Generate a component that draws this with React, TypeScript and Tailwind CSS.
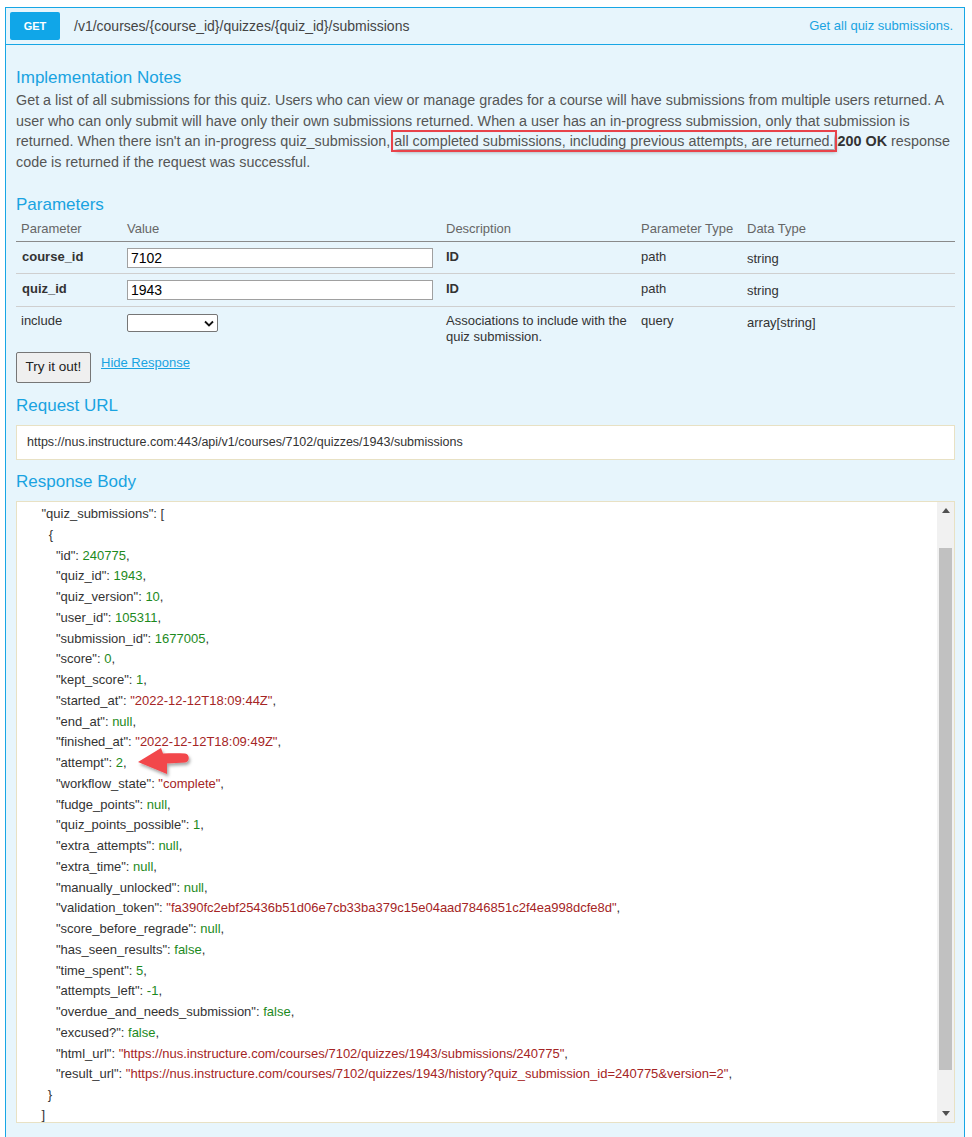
import React from "react";

const F = { fontFamily: '"Liberation Sans", Arial, sans-serif' };

function kv(k: string, v: string, t: "n" | "s") {
  return (
    <>
      <span>"{k}": </span>
      <span className={t === "n" ? "text-[#1d8a1d]" : "text-[#a52525]"}>{v}</span>
      <span>,</span>
    </>
  );
}

const items: [string, string, "n" | "s"][] = [
  ["id", "240775", "n"],
  ["quiz_id", "1943", "n"],
  ["quiz_version", "10", "n"],
  ["user_id", "105311", "n"],
  ["submission_id", "1677005", "n"],
  ["score", "0", "n"],
  ["kept_score", "1", "n"],
  ["started_at", '"2022-12-12T18:09:44Z"', "s"],
  ["end_at", "null", "n"],
  ["finished_at", '"2022-12-12T18:09:49Z"', "s"],
  ["attempt", "2", "n"],
  ["workflow_state", '"complete"', "s"],
  ["fudge_points", "null", "n"],
  ["quiz_points_possible", "1", "n"],
  ["extra_attempts", "null", "n"],
  ["extra_time", "null", "n"],
  ["manually_unlocked", "null", "n"],
  ["validation_token", '"fa390fc2ebf25436b51d06e7cb33ba379c15e04aad7846851c2f4ea998dcfe8d"', "s"],
  ["score_before_regrade", "null", "n"],
  ["has_seen_results", "false", "n"],
  ["time_spent", "5", "n"],
  ["attempts_left", "-1", "n"],
  ["overdue_and_needs_submission", "false", "n"],
  ["excused?", "false", "n"],
  ["html_url", '"https://nus.instructure.com/courses/7102/quizzes/1943/submissions/240775"', "s"],
  ["result_url", '"https://nus.instructure.com/courses/7102/quizzes/1943/history?quiz_submission_id=240775&version=2"', "s"],
];

function Heading({ children }: { children: React.ReactNode }) {
  return <div className="text-[17px] leading-[22px] text-[#19a3e1]">{children}</div>;
}

const COLS = "grid grid-cols-[111px_319px_195px_106px_1fr]";

export default function App() {
  return (
    <div className="bg-white min-h-[1137px] pt-[7px] pl-[5px]" style={F}>
      <div className="w-[960px] h-[1140px] border border-[#17a6e5] bg-[#e7f5fc]">
        {/* header */}
        <div className="h-[37px] border-b border-[#17a6e5] flex items-center pl-[4px] pr-[11px]">
          <div className="w-[50px] h-[28px] bg-[#10a6e8] rounded-[2px] flex items-center justify-center text-white text-[11px] font-bold">
            GET
          </div>
          <div className="ml-[14px] text-[14px] text-[#444] flex-1">/v1/courses/{"{course_id}"}/quizzes/{"{quiz_id}"}/submissions</div>
          <div className="text-[13px] text-[#19a3e1] -mt-[1px]">Get all quiz submissions.</div>
        </div>

        <div className="pl-[10px] pr-[9px]">
          <div className="pt-[22px]">
            <Heading>Implementation Notes</Heading>
          </div>
          <p className="text-[14.35px] leading-[20.5px] text-[#555] mt-[1px]">
            Get a list of all submissions for this quiz. Users who can view or manage grades for a course will have submissions from multiple users returned. A user who can only submit will have only their own submissions returned. When a user has an in-progress submission, only that submission is returned. When there isn't an in-progress quiz_submission,{" "}
            <span className="outline-2 outline-offset-[1px] outline-[#e8434a] shadow-[2px_3px_4px_rgba(0,0,0,0.35)]">
              all completed submissions, including previous attempts, are returned.
            </span>{" "}
            <b className="text-[#333]">200 OK</b> response code is returned if the request was successful.
          </p>

          <div className="mt-[22px]">
            <Heading>Parameters</Heading>
          </div>
          <div className="mt-[3px] text-[13px]">
            <div className={`${COLS} border-b border-[#8a8a8a] text-[#666] h-[23px] items-start`}>
              <div className="pl-[5px]">Parameter</div>
              <div>Value</div>
              <div>Description</div>
              <div>Parameter Type</div>
              <div>Data Type</div>
            </div>
            <div className={`${COLS} border-b border-[#cfcfcf] h-[32px] text-[#333]`}>
              <div className="pl-[6px] pt-[5px] font-bold">course_id</div>
              <div className="pt-[6px]">
                <div className="w-[306px] h-[20px] bg-white border border-[#a0a0a0] text-[14px] leading-[18px] pl-[3px] text-black">7102</div>
              </div>
              <div className="pt-[5px] font-bold">ID</div>
              <div className="pt-[5px]">path</div>
              <div className="pt-[7px]">string</div>
            </div>
            <div className={`${COLS} border-b border-[#cfcfcf] h-[33px] text-[#333]`}>
              <div className="pl-[6px] pt-[5px] font-bold">quiz_id</div>
              <div className="pt-[6px]">
                <div className="w-[306px] h-[20px] bg-white border border-[#a0a0a0] text-[14px] leading-[18px] pl-[3px] text-black">1943</div>
              </div>
              <div className="pt-[5px] font-bold">ID</div>
              <div className="pt-[5px]">path</div>
              <div className="pt-[7px]">string</div>
            </div>
            <div className={`${COLS} h-[40px] text-[#333] leading-[16px]`}>
              <div className="pl-[5px] pt-[6px]">include</div>
              <div className="pt-[7px]">
                <div className="w-[91px] h-[18px] bg-white border border-[#767676] rounded-[2px] flex items-center justify-end pr-[3px]">
                  <svg width="10" height="7" viewBox="0 0 10 7"><path d="M1 1.5 L5 5.5 L9 1.5" fill="none" stroke="#111" strokeWidth="1.8" /></svg>
                </div>
              </div>
              <div className="pt-[6px]">Associations to include with the quiz submission.</div>
              <div className="pt-[6px]">query</div>
              <div className="pt-[8px]">array[string]</div>
            </div>
          </div>

          <div className="flex items-start mt-[5px]">
            <div className="w-[75px] h-[31px] bg-[#efefef] border border-[#767676] rounded-[2px] flex items-center justify-center text-[13.5px] text-[#222]">
              Try it out!
            </div>
            <div className="ml-[10px] mt-[1px] text-[13px] text-[#19a3e1] underline">Hide Response</div>
          </div>

          <div className="mt-[12px]">
            <Heading>Request URL</Heading>
          </div>
          <div className="mt-[8px] h-[35px] bg-white border border-[#e8e1c4] flex items-center pl-[10px] text-[12.5px] text-[#333]">
            https://nus.instructure.com:443/api/v1/courses/7102/quizzes/1943/submissions
          </div>

          <div className="mt-[11px]">
            <Heading>Response Body</Heading>
          </div>
          <div className="mt-[8px] h-[622px] bg-white border border-[#e8e1c4] flex overflow-hidden">
            <div className="flex-1 relative overflow-hidden pl-[10px] pt-[2px] text-[13px] leading-[20.75px] text-[#333] whitespace-pre">
              <div>{'    "quiz_submissions": ['}</div>
              <div>{"      {"}</div>
              {items.map(([k, v, t]) => (
                <div key={k}>
                  {"        "}
                  {kv(k, v, t)}
                </div>
              ))}
              <div className="-ml-px">{"      }"}</div>
              <div className="-mt-[1px]">{"    ]"}</div>
              <svg
                className="absolute left-[113px] top-[239px]"
                width="66"
                height="42"
                viewBox="0 0 66 42"
              >
                <defs>
                  <filter id="sh" x="-20%" y="-20%" width="150%" height="160%">
                    <feDropShadow dx="1.5" dy="2.5" stdDeviation="1.8" floodColor="#000" floodOpacity="0.35" />
                  </filter>
                </defs>
                <path
                  d="M8 21 L31 7 L33 12.5 C41 12 49 12 55 12.5 C60 13 60 21 55 21.5 C49 22 43 22 37 22.5 L37 33 Z"
                  fill="#f2464b"
                  filter="url(#sh)"
                />
              </svg>
            </div>
            <div className="w-[17px] bg-[#f1f1f1] flex flex-col items-center">
              <div className="h-[17px] flex items-center justify-center">
                <svg width="8" height="5" viewBox="0 0 8 5"><path d="M0 5 L4 0 L8 5 Z" fill="#505050" /></svg>
              </div>
              <div className="mt-[29px] w-[13px] h-[522px] bg-[#c1c1c1]" />
              <div className="flex-1" />
              <div className="h-[17px] flex items-center justify-center">
                <svg width="8" height="5" viewBox="0 0 8 5"><path d="M0 0 L8 0 L4 5 Z" fill="#505050" /></svg>
              </div>
            </div>
          </div>
        </div>
      </div>
    </div>
  );
}
